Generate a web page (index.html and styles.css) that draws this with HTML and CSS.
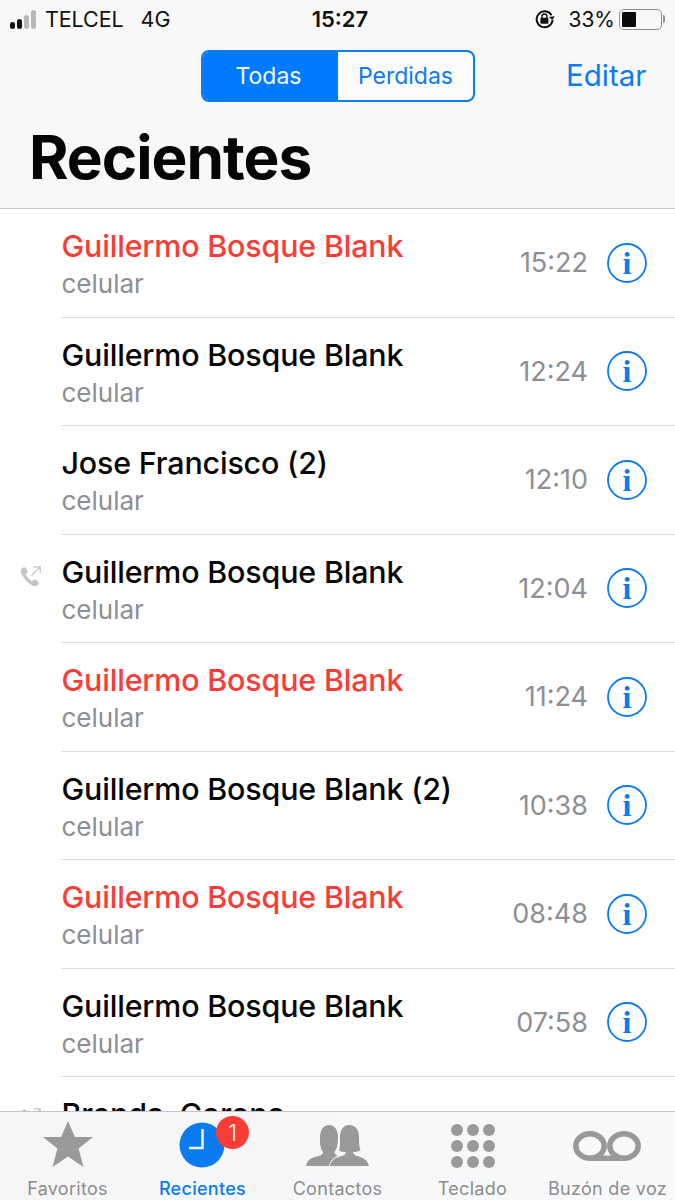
FILE: index.html
```html
<!DOCTYPE html>
<html lang="es">
<head>
<meta charset="utf-8">
<title>Recientes</title>
<link rel="stylesheet" href="styles.css">
</head>
<body>
<div class="phone">
  <header class="head">
    <div class="status">
      <div class="status-left">
        <span class="signal"><i></i><i></i><i class="off"></i><i class="off"></i></span>
        <span class="carrier">TELCEL</span>
        <span class="net">4G</span>
      </div>
      <div class="clock">15:27</div>
      <div class="status-right">
        <svg class="lock" width="22" height="20" viewBox="0 0 22 20"><path d="M17.5 6.2A8 8 0 1 0 18.6 11" fill="none" stroke="#111" stroke-width="2"/><path d="M15 7.6h6l-3 3.4z" fill="#111" transform="rotate(-8 18 9)"/><rect x="6.400" y="8.800" width="8" height="6" rx="1" fill="#111"/><path d="M8 9V7.400a2.400 2.400 0 0 1 4.900 0V9" fill="none" stroke="#111" stroke-width="1.400"/></svg>
        <span class="pct">33%</span>
        <span class="battery"><span class="battery-level"></span></span>
        <span class="battery-tip"></span>
      </div>
    </div>
    <div class="nav">
      <div class="segment">
        <span class="seg seg-on">Todas</span>
        <span class="seg">Perdidas</span>
      </div>
      <span class="edit">Editar</span>
    </div>
    <h1 class="title">Recientes</h1>
  </header>

  <main class="list">
    <div class="row">
      <div class="slot"></div>
      <div class="cell">
        <div class="who"><div class="name missed">Guillermo Bosque Blank</div><div class="kind">celular</div></div>
        <span class="time">15:22</span>
        <svg class="info" viewBox="0 0 40 40"><circle cx="20" cy="20" r="19" /><text x="20" y="31" class="info-i">i</text></svg>
      </div>
    </div>
    <div class="row">
      <div class="slot"></div>
      <div class="cell">
        <div class="who"><div class="name">Guillermo Bosque Blank</div><div class="kind">celular</div></div>
        <span class="time">12:24</span>
        <svg class="info" viewBox="0 0 40 40"><circle cx="20" cy="20" r="19" /><text x="20" y="31" class="info-i">i</text></svg>
      </div>
    </div>
    <div class="row">
      <div class="slot"></div>
      <div class="cell">
        <div class="who"><div class="name">Jose Francisco (2)</div><div class="kind">celular</div></div>
        <span class="time">12:10</span>
        <svg class="info" viewBox="0 0 40 40"><circle cx="20" cy="20" r="19" /><text x="20" y="31" class="info-i">i</text></svg>
      </div>
    </div>
    <div class="row">
      <div class="slot">
        <svg class="outgoing" viewBox="0 0 24 24"><path d="M3.200 3.200c1.600-1.400 3.200-1.200 3.900.1l1.300 2.400c.5 1 .2 1.800-.7 2.500l-1.100.8c.6 2 3.800 5.900 6.400 7l1.200-1c.8-.7 1.700-.8 2.500-.2l2.300 1.600c1.100.8 1.200 2.200.1 3.400-1.200 1.300-3 1.900-5 1.100C9 18.600 3.600 12.400 1.900 7.500c-.6-1.700 0-3.300 1.300-4.300z"/><path class="arrow" d="M12.500 10.500L21 2M14.500 1.800h6.700v6.700"/></svg>
      </div>
      <div class="cell">
        <div class="who"><div class="name">Guillermo Bosque Blank</div><div class="kind">celular</div></div>
        <span class="time">12:04</span>
        <svg class="info" viewBox="0 0 40 40"><circle cx="20" cy="20" r="19" /><text x="20" y="31" class="info-i">i</text></svg>
      </div>
    </div>
    <div class="row">
      <div class="slot"></div>
      <div class="cell">
        <div class="who"><div class="name missed">Guillermo Bosque Blank</div><div class="kind">celular</div></div>
        <span class="time">11:24</span>
        <svg class="info" viewBox="0 0 40 40"><circle cx="20" cy="20" r="19" /><text x="20" y="31" class="info-i">i</text></svg>
      </div>
    </div>
    <div class="row">
      <div class="slot"></div>
      <div class="cell">
        <div class="who"><div class="name">Guillermo Bosque Blank (2)</div><div class="kind">celular</div></div>
        <span class="time">10:38</span>
        <svg class="info" viewBox="0 0 40 40"><circle cx="20" cy="20" r="19" /><text x="20" y="31" class="info-i">i</text></svg>
      </div>
    </div>
    <div class="row">
      <div class="slot"></div>
      <div class="cell">
        <div class="who"><div class="name missed">Guillermo Bosque Blank</div><div class="kind">celular</div></div>
        <span class="time">08:48</span>
        <svg class="info" viewBox="0 0 40 40"><circle cx="20" cy="20" r="19" /><text x="20" y="31" class="info-i">i</text></svg>
      </div>
    </div>
    <div class="row">
      <div class="slot"></div>
      <div class="cell">
        <div class="who"><div class="name">Guillermo Bosque Blank</div><div class="kind">celular</div></div>
        <span class="time">07:58</span>
        <svg class="info" viewBox="0 0 40 40"><circle cx="20" cy="20" r="19" /><text x="20" y="31" class="info-i">i</text></svg>
      </div>
    </div>
    <div class="row">
      <div class="slot">
        <svg class="outgoing" viewBox="0 0 24 24"><path d="M3.200 3.200c1.600-1.400 3.200-1.200 3.900.1l1.300 2.400c.5 1 .2 1.800-.7 2.500l-1.100.8c.6 2 3.800 5.900 6.400 7l1.200-1c.8-.7 1.700-.8 2.500-.2l2.300 1.600c1.100.8 1.200 2.200.1 3.400-1.200 1.300-3 1.900-5 1.100C9 18.600 3.600 12.400 1.900 7.500c-.6-1.700 0-3.300 1.300-4.300z"/><path class="arrow" d="M12.500 10.500L21 2M14.500 1.800h6.700v6.700"/></svg>
      </div>
      <div class="cell">
        <div class="who"><div class="name">Brenda&nbsp;&nbsp;Corona</div><div class="kind-empty"></div></div>
        <svg class="info" viewBox="0 0 40 40"><circle cx="20" cy="20" r="19" /></svg>
      </div>
    </div>
  </main>

  <nav class="tabs">
    <div class="tab">
      <svg class="tab-icon star" width="50" height="46" viewBox="0 0 50 46"><path d="M25 0l6.800 16H50L35.500 27.500l5 18.500L25 35.500 9.500 46l5-18.500L0 16h18.200z" fill="#999"/></svg>
      <span class="tab-label">Favoritos</span>
    </div>
    <div class="tab tab-on">
      <div class="clock-icon">
        <svg width="46" height="46" viewBox="0 0 46 46"><circle cx="23" cy="23" r="22.500" fill="#0a7cf0"/><path d="M23.500 7V26H10" fill="none" stroke="#eef3fb" stroke-width="2.500"/></svg>
        <span class="badge">1</span>
      </div>
      <span class="tab-label">Recientes</span>
    </div>
    <div class="tab">
      <svg class="tab-icon people" width="63" height="41" viewBox="0 0 63 41"><path d="M0 41C1 35 5 33 11 31.500 15 30.500 17 29 17 27 14.500 24 13.500 19 14 12 14.500 4 18 0 23 0 28 0 32 4 32 12 32 19 31 24 28.500 27 28.500 29 30 30 32 30.800 27 33 24 36 23 41Z" fill="#999"/><path d="M24 41C25 36 28 33 34 31.500 38 30.500 40 29.500 40 27 36 27 33.500 26.500 33 25 34.500 22 34 16 34 12 34 4 38 0 43 0 49 0 53 4 53 12 53 17 53 22 54.500 25 53 26.500 50 27 47 27 47 29.500 49 30.500 53 31.500 58 33 62 36 63 41Z" fill="#999"/></svg>
      <span class="tab-label">Contactos</span>
    </div>
    <div class="tab">
      <div class="keypad"><i></i><i></i><i></i><i></i><i></i><i></i><i></i><i></i><i></i></div>
      <span class="tab-label">Teclado</span>
    </div>
    <div class="tab">
      <svg class="tab-icon vm" width="68" height="30" viewBox="0 0 68 30"><ellipse cx="17" cy="15" rx="14.200" ry="12.200" fill="none" stroke="#999" stroke-width="5.500"/><ellipse cx="51" cy="15" rx="14.200" ry="12.200" fill="none" stroke="#999" stroke-width="5.500"/><path d="M17 24.500h34V30H17z" fill="#999"/></svg>
      <span class="tab-label">Buzón de voz</span>
    </div>
  </nav>
</div>
</body>
</html>
```
FILE: styles.css
```css
* { box-sizing: border-box; }
html, body { margin: 0; padding: 0; }
body { width: 675px; height: 1200px; overflow: hidden; background: #fff; font-family: Inter, "Liberation Sans", sans-serif; }
.phone { width: 675px; height: 1200px; display: flex; flex-direction: column; }

.head { height: 209px; flex: none; background: #f8f8f8; border-bottom: 1px solid #c8c8ca; }
.status { height: 38px; padding: 0 10px; display: grid; grid-template-columns: 1fr auto 1fr; align-items: center; color: #111; font-size: 21px; }
.status-left { display: flex; align-items: center; }
.signal { display: flex; align-items: flex-end; gap: 2px; width: 30px; height: 20px; margin-right: 5px; }
.signal i { width: 5px; background: #111; border-radius: 3px; }
.signal i:nth-child(1) { height: 7px; }
.signal i:nth-child(2) { height: 10px; }
.signal i:nth-child(3) { height: 14px; }
.signal i:nth-child(4) { height: 19px; }
.signal i.off { background: #b8b8b8; }
.carrier { font-size: 21.500px; letter-spacing: -.1px; }
.net { margin-left: 17px; font-size: 21.500px; }
.clock { font-weight: 600; font-size: 22px; margin-left: 5px; }
.status-right { display: flex; align-items: center; justify-content: flex-end; }
.lock { margin-right: 12px; }
.pct { font-size: 21px; margin-right: 4px; }
.battery { width: 43px; height: 21px; border: 1.500px solid #8e8e8e; border-radius: 5px; padding: 2px; display: flex; }
.battery-level { width: 14px; background: #0a0a0a; border-radius: 1px; }
.battery-tip { width: 2px; height: 8px; background: #8e8e8e; margin-left: 1px; margin-right: 0; border-radius: 0 2px 2px 0; }

.nav { height: 51px; margin-top: 12px; display: flex; align-items: center; padding-left: 201px; }
.segment { width: 274px; height: 52px; border: 2px solid #0a7cf0; border-radius: 8px; display: flex; overflow: hidden; background: #fbfbfb; }
.seg { display: flex; align-items: center; justify-content: center; flex: 1; color: #0a7cf0; font-size: 23px; }
.seg-on { flex: none; width: 135px; padding-right: 4px; background: #007bff; color: #f4f8ff; }
.edit { margin-left: 91px; margin-bottom: 1px; color: #0a7cf0; font-size: 29.500px; }

.title { margin: 22px 0 0 29px; font-size: 60.300px; line-height: 70px; font-weight: 700; color: #050505; letter-spacing: -1px; }

.list { flex: 1; min-height: 0; overflow: hidden; background: #fff; }
.row { height: 108.500px; display: flex; }
.slot { width: 61px; flex: none; padding: 30px 0 0 19px; }
.cell { flex: 1; display: flex; align-items: center; padding-right: 28px; border-bottom: 1px solid #dedee0; }
.who { flex: 1; min-width: 0; }
.name { font-size: 30.400px; font-weight: 500; line-height: 36px; color: #060606; letter-spacing: -.16px; margin-top: 5px; margin-left: .5px; }
.name.missed { color: #fa3c36; }
.kind { font-size: 26px; line-height: 36px; color: #8e8e93; margin-top: 2px; margin-left: .5px; }
.kind-empty { height: 36px; margin-top: 2px; }
.time { font-size: 27px; color: #8e8e93; margin-right: 19px; }
.info { width: 40px; height: 40px; flex: none; }
.info circle { fill: none; stroke: #0a7cf0; stroke-width: 1.800; }
.info-i { font-family: "Liberation Serif", serif; font-size: 32px; font-weight: 700; text-anchor: middle; fill: #0a7cf0; }
.outgoing { width: 24px; height: 24px; display: block; fill: #c6c6c8; }
.outgoing .arrow { fill: none; stroke: #c6c6c8; stroke-width: 1.300; }

.tabs { height: 89px; flex: none; background: linear-gradient(90deg, #f5f5f6, #f8f9fb); border-top: 1px solid #c6c6c8; display: flex; position: relative; }
.tab { flex: 1; height: 100%; display: flex; flex-direction: column; align-items: center; justify-content: flex-end; color: #8d8d8d; }
.tab-on { color: #0a7cf0; }
.tab-label { font-size: 18px; line-height: 22px; font-weight: 400; margin-top: 7px; letter-spacing: .3px; }
.tab-on .tab-label { font-weight: 500; }
.tab-icon { display: block; }
.star { margin-bottom: 4px; }
.people { margin-bottom: 5px; }
.vm { position: relative; left: -1px; margin-bottom: 10px; }
.clock-icon { position: relative; width: 46px; height: 46px; margin-right: 1px; margin-bottom: 3px; }
.clock-icon svg { display: block; }
.badge { position: absolute; left: 37px; top: -6px; width: 33px; height: 33px; border-radius: 50%; background: #fa3c36; color: #fff; font-size: 23px; font-weight: 300; display: flex; align-items: center; justify-content: center; }
.keypad { display: grid; grid-template-columns: repeat(3, 12px); grid-auto-rows: 12px; gap: 4px; margin-bottom: 3px; }
.keypad i { background: #999; border-radius: 50%; }
```
